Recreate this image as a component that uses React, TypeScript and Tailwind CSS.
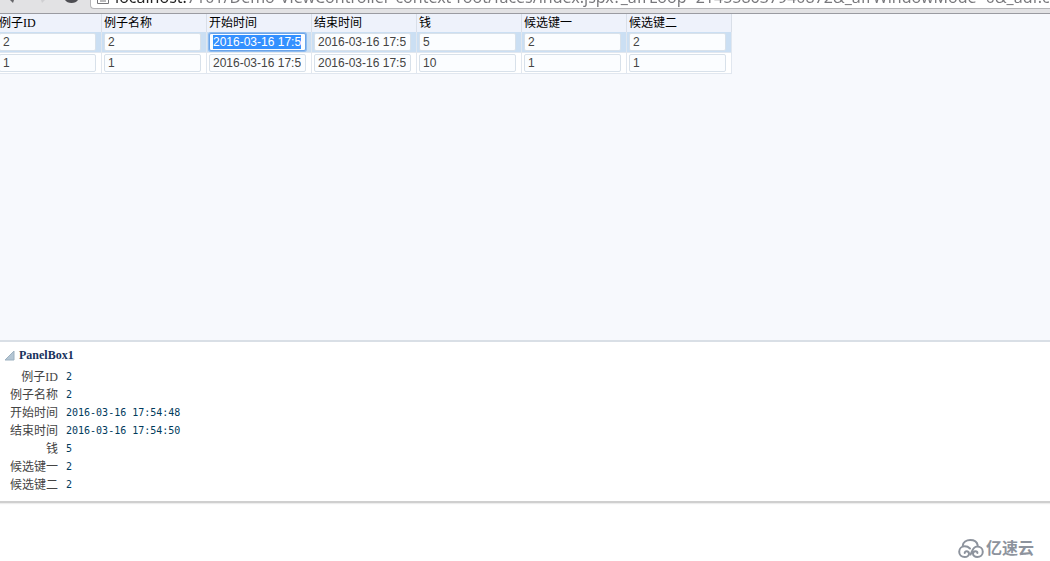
import { useEffect, useRef } from "react";

const columns = ["例子ID", "例子名称", "开始时间", "结束时间", "钱", "候选键一", "候选键二"];

const rows = [
  ["2", "2", "2016-03-16 17:54:48", "2016-03-16 17:54:50", "5", "2", "2"],
  ["1", "1", "2016-03-16 17:54:32", "2016-03-16 17:54:34", "10", "1", "1"],
];

function BrowserBar() {
  return (
    <header className="h-3.5 overflow-hidden border-b border-[#9a9ba1] bg-[#e2e2e4]">
      <div className="flex items-start">
        <svg className="h-2 w-[90px] shrink-0" viewBox="0 0 90 8" fill="none" aria-hidden="true">
          <path d="M10 0h4l-1 3z" fill="#66666a" />
          <path d="M41 0h4l-3 3z" fill="#cfcfd2" />
          <path d="M65 0h13q-2 3-6.500 3T65 0z" fill="#4d4d52" />
        </svg>
        <div className="flex h-[9px] min-w-0 flex-1 items-end overflow-hidden rounded-bl-sm border-b border-l border-[#b5b5b8] bg-white pl-1.5">
          <svg className="mr-1.5 mb-1 h-2 w-3 shrink-0" viewBox="0 0 12 8" fill="none" stroke="#77777b" aria-hidden="true">
            <path d="M.5 0v7.500h11V0M3 2.500h6M3 5h6" />
          </svg>
          <input
            aria-label="地址"
            readOnly
            className="h-[22px] min-w-0 flex-1 bg-[linear-gradient(90deg,#222_71px,#77777b_71px)] bg-clip-text font-['Noto_Sans',sans-serif] text-base leading-[22px] text-transparent outline-none"
            value="localhost:7101/Demo-ViewController-context-root/faces/index.jspx?_afrLoop=214558637940872&_afrWindowMode=0&_adf.ctrl-state=1"
          />
        </div>
      </div>
    </header>
  );
}

function DataTable() {
  const active = useRef<HTMLInputElement>(null);
  useEffect(() => {
    const el = active.current;
    if (!el) return;
    el.focus({ preventScroll: true });
    el.setSelectionRange(0, el.value.length, "backward");
    el.scrollLeft = 0;
  }, []);
  return (
    <table className="-ml-[3px] table-fixed border-separate border-spacing-0">
      <thead>
        <tr className="bg-[#eef2fb]">
          {columns.map((c) => (
            <th
              key={c}
              scope="col"
              className="h-[18px] w-[105px] border-r border-[#d9dfe8] p-0 pl-0.5 text-left text-xs leading-[18px] font-normal text-black"
            >
              {c}
            </th>
          ))}
        </tr>
      </thead>
      <tbody>
        {rows.map((r, i) => (
          <tr key={i} className={i === 0 ? "bg-[#cbdff3]" : "bg-white"}>
            {r.map((v, j) => (
              <td key={j} className="h-[21px] border-r border-b border-[#e1e7ef] p-0 pl-0.5">
                <input
                  ref={i === 0 && j === 2 ? active : undefined}
                  aria-label={columns[j]}
                  defaultValue={v}
                  className="block h-[18px] w-[97px] rounded-xs border border-[#d8e1ea] bg-[#fbfdff] pr-1 pl-[3px] font-['Liberation_Sans',sans-serif] text-xs text-[#444] outline-none selection:bg-[#3390ff] selection:text-white focus:border-[#6ba4e8] focus:ring-1 focus:ring-[#8ebcf0]"
                />
              </td>
            ))}
          </tr>
        ))}
      </tbody>
    </table>
  );
}

function PanelBox() {
  return (
    <section className="border-t-2 border-b-2 border-t-[#d9dfe6] border-b-[#cfcfcf] bg-white pb-[7px] shadow-[0_1px_1px_#ededed]">
      <h2>
        <button type="button" className="flex h-[26px] items-center gap-1 pl-1 font-['Liberation_Serif',serif] text-xs font-bold text-[#17315c]">
          <svg className="size-[11px]" viewBox="0 0 11 11" aria-hidden="true">
            <path d="M10 1v9H1z" fill="#b4c6d4" stroke="#9db1c0" />
          </svg>
          PanelBox1
        </button>
      </h2>
      <dl className="grid grid-cols-[58px_1fr] gap-x-2 text-xs leading-[18px]">
        {columns.map((c, i) => (
          <div key={c} className="contents">
            <dt className="text-right whitespace-nowrap text-[#444]">{c}</dt>
            <dd className="font-['DejaVu_Sans_Mono',monospace] text-[10px] leading-[18px] text-[#003a5c]">{rows[0][i]}</dd>
          </div>
        ))}
      </dl>
    </section>
  );
}

function Brand() {
  return (
    <footer className="flex justify-end pt-9 pr-4">
      <div className="flex items-center gap-0.5 text-[#8d939d]">
        <svg className="h-[19px] w-[26px]" viewBox="0 0 26 19" fill="none" stroke="currentColor" strokeWidth="2" strokeLinecap="round" aria-hidden="true">
          <path d="M4.800 6.500C5.200 3.200 8.200 1 12.200 1c4 0 6.800 2 7.500 5.200" />
          <path d="M12 9.500C10.500 8 8.800 7.300 6.800 7.300 3.500 7.300 1.200 9.700 1.200 12.700s2.400 5.300 5.500 5.300c2.600 0 4.300-1.600 4.300-3.300 0-1.600-1.200-2.500-2.400-2.500-1 0-1.900.7-1.900 1.700" />
          <path d="M12.500 15.500c1.700-3.700 2.600-8 6.600-8 3.200 0 5.700 2.200 5.700 5.200S22.400 18 19.300 18c-2.600 0-4.300-1.600-4.300-3.300 0-1.600 1.200-2.500 2.400-2.500 1.200 0 2 .7 2 1.700" />
        </svg>
        <span className="text-base leading-[19px] font-bold">亿速云</span>
      </div>
    </footer>
  );
}

export default function App() {
  return (
    <div className="min-h-screen overflow-hidden bg-white font-['Liberation_Serif','Noto_Sans_CJK_SC',sans-serif]">
      <BrowserBar />
      <main>
        <div className="min-h-[326px] bg-[#f7f9fd]">
          <DataTable />
        </div>
        <PanelBox />
      </main>
      <Brand />
    </div>
  );
}
